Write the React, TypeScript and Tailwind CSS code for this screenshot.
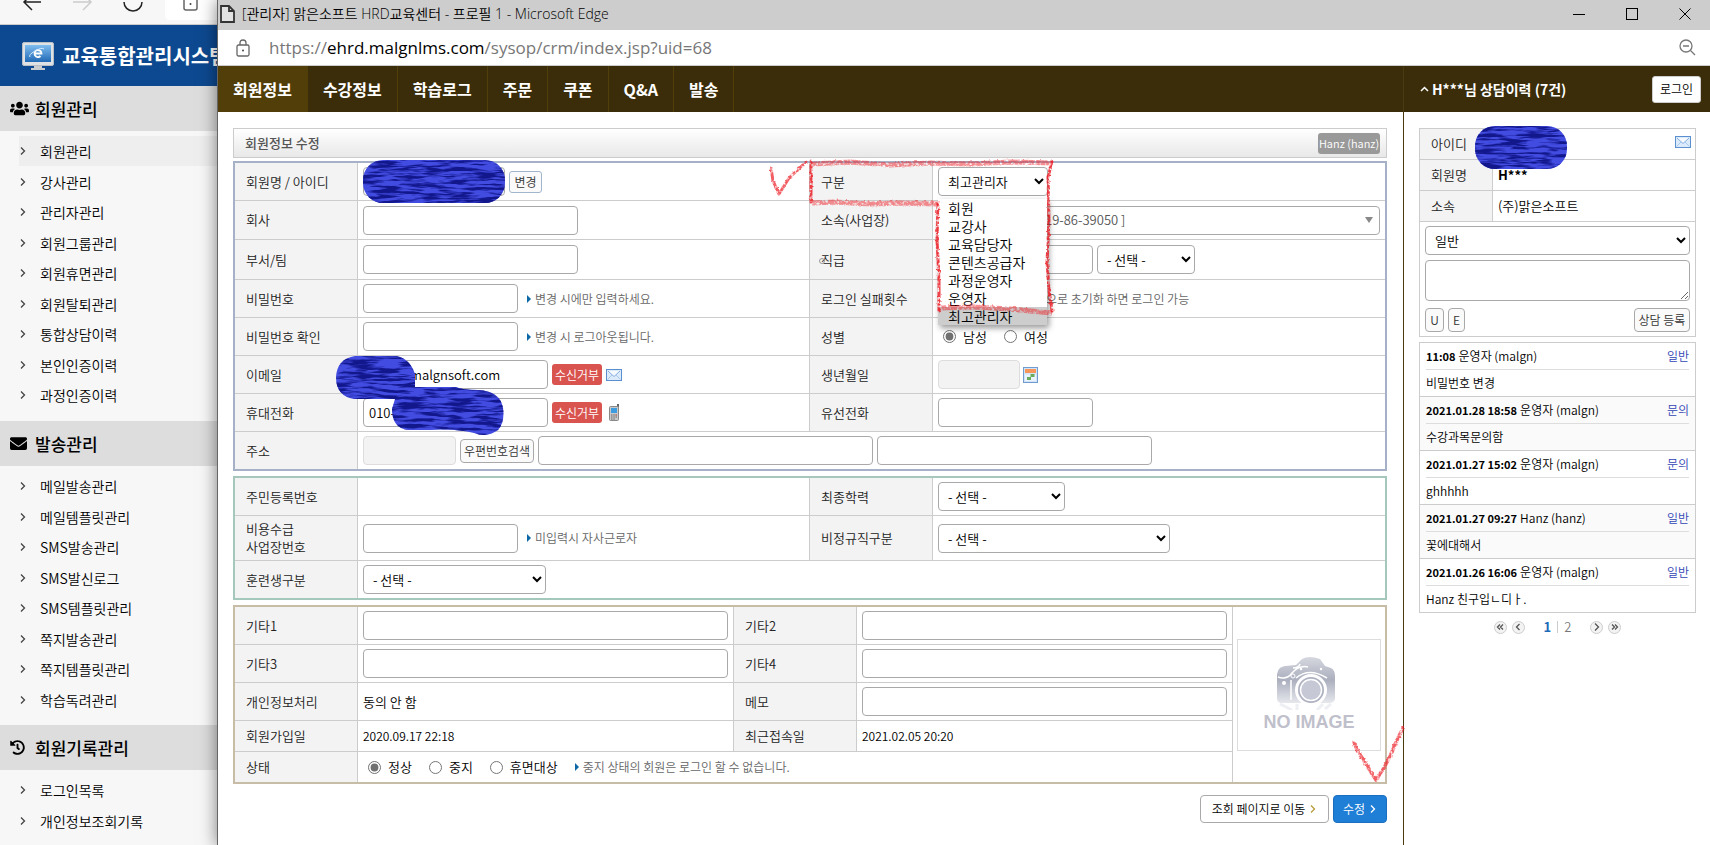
import React from 'react';
import { FaUsers, FaEnvelope, FaHistory } from 'react-icons/fa';

const menus = [
  {
    title: '회원관리',
    icon: <FaUsers size={19} />,
    active: '회원관리',
    items: ['회원관리', '강사관리', '관리자관리', '회원그룹관리', '회원휴면관리', '회원탈퇴관리', '통합상담이력', '본인인증이력', '과정인증이력'],
  },
  {
    title: '발송관리',
    icon: <FaEnvelope size={17} />,
    items: ['메일발송관리', '메일템플릿관리', 'SMS발송관리', 'SMS발신로그', 'SMS템플릿관리', '쪽지발송관리', '쪽지템플릿관리', '학습독려관리'],
  },
  {
    title: '회원기록관리',
    icon: <FaHistory size={15} />,
    items: ['로그인목록', '개인정보조회기록'],
  },
];

const tabs = ['회원정보', '수강정보', '학습로그', '주문', '쿠폰', 'Q&A', '발송'];

const roles = ['회원', '교강사', '교육담당자', '콘텐츠공급자', '과정운영자', '운영자', '최고관리자'];

const logs = [
  { date: '11:08', writer: '운영자 (malgn)', type: '일반', text: '비밀번호 변경' },
  { date: '2021.01.28 18:58', writer: '운영자 (malgn)', type: '문의', text: '수강과목문의함' },
  { date: '2021.01.27 15:02', writer: '운영자 (malgn)', type: '문의', text: 'ghhhhh' },
  { date: '2021.01.27 09:27', writer: 'Hanz (hanz)', type: '일반', text: '꽃에대해서' },
  { date: '2021.01.26 16:06', writer: '운영자 (malgn)', type: '일반', text: 'Hanz 친구입ㄴ디ㅏ.' },
];

const field = 'h-[29px] rounded border border-[#a9a9a9] bg-white px-[5px] text-[13px] text-black';
const select = 'h-[29px] rounded border border-[#a9a9a9] bg-white px-[5px] text-[13px] text-black';
const smallButton = 'rounded border border-[#a9a9a9] bg-[#fafafa] text-[12px] text-[#333]';

const Chevron: React.FC<{ className?: string; left?: boolean; double?: boolean }> = ({ className = '', left, double }) => (
  <svg className={className} width="8" height="8" viewBox="0 0 8 8" fill="none" stroke="currentColor" strokeWidth="1.300">
    {left ? <path d={double ? 'M4 1.5L1.5 4L4 6.5M7 1.5L4.5 4L7 6.5' : 'M5.5 1L2.5 4L5.5 7'} /> : <path d={double ? 'M1 1.5L3.5 4L1 6.5M4 1.5L6.5 4L4 6.5' : 'M2 0.5L5.5 4L2 7.5'} />}
  </svg>
);

const MailIcon = () => (
  <svg width="16" height="12" viewBox="0 0 16 12">
    <rect x="0.5" y="0.5" width="15" height="11" fill="#dcebfb" stroke="#5b8fd0" />
    <path d="M1.5 10.5L6 6M14.5 10.5L10 6" stroke="#a9c9ee" />
    <path d="M2 2L8 7.5L14 2" fill="#f6faff" stroke="#84aee0" />
  </svg>
);

const PhoneIcon = () => (
  <svg className="ml-[3px]" width="11" height="17" viewBox="0 0 11 17">
    <rect x="8" y="0" width="2" height="5" fill="#666" />
    <rect x="0.5" y="2.5" width="9" height="14" rx="1" fill="#c9c9c9" stroke="#888" />
    <rect x="2" y="4" width="6" height="5" fill="#3d9be0" />
    <path d="M2 11h1.500M4.300 11h1.500M6.500 11h1.500M2 13h1.500M4.300 13h1.500M6.500 13h1.500M2 15h1.500M4.300 15h1.500" stroke="#666" />
    <path d="M6.500 11h1.500" stroke="#d66" />
  </svg>
);

const CalendarIcon = () => (
  <svg className="-ml-px" width="15" height="16" viewBox="0 0 15 16">
    <rect x="0.5" y="0.5" width="14" height="15" fill="#d4e4f7" stroke="#6f9bd1" />
    <rect x="2" y="2" width="11" height="4" fill="#f7965a" />
    <path d="M2 7.500h11v6.500h-11z" fill="#eaf3fd" />
    <path d="M7.500 7h4v3h-4zM4 10h4v3h-4z" fill="#69ad5c" />
  </svg>
);

const CameraImage = () => (
  <svg className="mr-[6px]" width="58" height="54" viewBox="0 0 58 54">
    <defs>
      <linearGradient id="cam" x1="0" y1="0" x2="0" y2="1">
        <stop offset="0" stopColor="#d6d8df" />
        <stop offset="0.5" stopColor="#abafbe" />
        <stop offset="1" stopColor="#e6e8ed" />
      </linearGradient>
    </defs>
    <path d="M1 15Q2 11 8 10L19 9L25 3Q32 -1 43 3L48 10L54 12Q58 14 58 20V43Q57 47 52 47H3Q0 46 0 42V18Z" fill="url(#cam)" />
    <path d="M1 21Q10 24 15 17Q22 9 31 11M16 12Q22 12 23 8M14 24V44" fill="none" stroke="#fff" strokeWidth="1.500" />
    <path d="M19 22Q32 11 50 22" fill="none" stroke="#fff" strokeWidth="1.500" />
    <circle cx="34" cy="34" r="16" fill="#fff" />
    <circle cx="34" cy="34" r="13" fill="#aeb2c0" />
    <circle cx="34" cy="34" r="10.500" fill="#c6c9d5" stroke="#fff" strokeWidth="1.500" />
    <circle cx="16" cy="20" r="2" fill="#b2b6c4" stroke="#fff" />
    <circle cx="7" cy="27" r="2" fill="#fff" />
    <circle cx="24" cy="13" r="1.200" fill="#fff" />
    <circle cx="44" cy="13" r="1.200" fill="#fff" />
    <path d="M3 48L15 54M20 48V54M46 48L40 54M54 48L48 53" stroke="#eeeff3" strokeWidth="3" />
  </svg>
);

const Hint: React.FC<{ children: React.ReactNode }> = ({ children }) => (
  <span className="ml-[5px] flex items-center gap-1 text-[12px] text-[#666]">
    <svg width="4" height="8" viewBox="0 0 4 8"><path d="M0 0L4 4L0 8Z" fill="#0b67a5" /></svg>
    {children}
  </span>
);

const Label: React.FC<{ children: React.ReactNode; htmlFor?: string; h?: string; last?: boolean }> = ({ children, htmlFor, h = 'h-[38px]', last }) => (
  <th scope="row" className={`${h} border-r border-[#ccc] bg-[#f3f3f3] pl-[11px] text-left text-[13px] leading-[18px] font-[350] text-[#222] ${last ? '' : 'border-b'}`}>
    {htmlFor ? <label htmlFor={htmlFor}>{children}</label> : children}
  </th>
);

const Cell: React.FC<{ children?: React.ReactNode; colSpan?: number; line?: boolean; last?: boolean }> = ({ children, colSpan, line, last }) => (
  <td colSpan={colSpan} className={`border-[#ccc] px-[5px] ${line ? 'border-r' : ''} ${last ? '' : 'border-b'}`}>
    <div className="relative flex items-center gap-1">{children}</div>
  </td>
);

const Radio: React.FC<{ name: string; label: string; checked?: boolean }> = ({ name, label, checked }) => (
  <label className="mr-2 ml-[5px] flex items-center gap-[7px] text-[13px] text-black">
    <input type="radio" name={name} defaultChecked={checked} className="m-0 h-[13px] w-[13px] accent-[#707070]" />
    {label}
  </label>
);

const Sidebar = () => (
  <aside className="w-[217px] shrink-0 overflow-hidden bg-[#f7f7f7]">
    <div className="flex h-[25px] items-start overflow-hidden border-b border-[#ccc] text-[#222]">
      <svg width="217" height="24" viewBox="0 0 217 24" fill="none" stroke="currentColor" strokeWidth="1.500">
        <path d="M41 2H24M32 -6L24 2L32 10" />
        <path d="M73 2H91M83 -6L91 2L83 10" stroke="#ccc" />
        <path d="M124 2A9 9 0 0 0 142 2" />
        <path d="M165 -2V15Q165 20 170 20H217V-2Z" fill="#fff" stroke="none" />
        <path d="M184 0V8Q184 10 186 10H195Q197 10 197 8V0" stroke="#666" />
        <circle cx="190.500" cy="4" r="1" fill="#444" stroke="none" />
      </svg>
    </div>
    <div className="flex h-[61px] items-center gap-2 bg-[#0d4990] pl-[22px]">
      <svg className="shrink-0" width="32" height="28" viewBox="0 0 32 28">
        <defs>
          <linearGradient id="scr" x1="0" y1="0" x2="0" y2="1">
            <stop offset="0" stopColor="#7fbdf0" />
            <stop offset="1" stopColor="#2069b5" />
          </linearGradient>
        </defs>
        <rect x="0.500" y="0.500" width="31" height="23" rx="1.500" fill="#dfe2e4" stroke="#b9bfc4" />
        <rect x="3" y="3" width="26" height="17" fill="url(#scr)" />
        <path d="M12 24H20V26H23V28H9V26H12Z" fill="#c9cdd0" />
        <path d="M12.500 11.500H19.500A3.500 3.500 0 1 0 18.500 14" fill="none" stroke="#fff" strokeWidth="1.800" />
        <path d="M8 15Q6 13 13 9Q20 5 22 7" fill="none" stroke="#d9ecff" />
      </svg>
      <span className="text-[20px] font-bold whitespace-nowrap text-white">교육통합관리시스템</span>
    </div>
    {menus.map(menu => (
      <section key={menu.title}>
        <h2 className="flex h-[45px] items-center bg-[#ddd] pl-[10px] text-[17px] font-medium text-black">
          <span className="w-[25px]">{menu.icon}</span>
          {menu.title}
        </h2>
        <ul className="pt-[5px] pb-[10px] pl-[19px]">
          {menu.items.map(item => (
            <li key={item} className="odd:mb-px">
              <a href="#" className={`flex h-[30px] items-center text-[14px] text-black ${menu.active === item ? 'bg-[#eee]' : ''}`}>
                <Chevron className="mr-[13px] text-[#444]" />
                {item}
              </a>
            </li>
          ))}
        </ul>
      </section>
    ))}
  </aside>
);

const BasicTable = () => (
  <div className="mt-[3px] border-2 border-[#a6b0c7]">
    <table className="w-full table-fixed border-separate border-spacing-0">
      <colgroup>
        <col className="w-[123px]" /><col /><col className="w-[123px]" /><col />
      </colgroup>
      <tbody>
        <tr>
          <Label htmlFor="name">회원명 / 아이디</Label>
          <Cell line>
            <input id="name" className={`${field} w-[142px]`} />
            <button className="h-[22px] w-[33px] rounded-[3px] border border-[#9fb6cc] bg-[#fafafa] text-[12px] text-[#333]">변경</button>
          </Cell>
          <Label htmlFor="role">구분</Label>
          <Cell>
            <select id="role" className={`${select} w-[110px]`} defaultValue="최고관리자">
              <option>최고관리자</option>
            </select>
            <ul className="absolute top-8 left-0 z-10 w-[109px] bg-white text-[14px] leading-[18px] text-black shadow-[2px_3px_6px_rgba(0,0,0,0.4)]">
              {roles.map(role => (
                <li key={role} className={`pl-[10px] ${role === '최고관리자' ? 'bg-[#cdcdcd]' : ''}`}>{role}</li>
              ))}
            </ul>
          </Cell>
        </tr>
        <tr>
          <Label htmlFor="company" h="h-[39px]">회사</Label>
          <Cell line><input id="company" className={`${field} w-[215px]`} /></Cell>
          <Label htmlFor="site">소속(사업장)</Label>
          <Cell>
            <select id="site" className="h-[29px] w-full appearance-none rounded border border-[#a9a9a9] bg-white pl-[106px] text-[13px] text-[#555]">
              <option>19-86-39050 ]</option>
            </select>
            <svg className="absolute right-[7px]" width="8" height="6" viewBox="0 0 8 6"><path d="M0 0H8L4 6Z" fill="#888" /></svg>
          </Cell>
        </tr>
        <tr>
          <Label htmlFor="dept" h="h-[40px]">부서/팀</Label>
          <Cell line><input id="dept" className={`${field} w-[215px]`} /></Cell>
          <Label htmlFor="rank">직급</Label>
          <Cell>
            <input id="rank" className={`${field} w-[155px]`} />
            <select aria-label="직급" className={`${select} w-[98px]`}><option>- 선택 -</option></select>
          </Cell>
        </tr>
        <tr>
          <Label htmlFor="pw">비밀번호</Label>
          <Cell line>
            <input id="pw" type="password" className={`${field} w-[155px]`} />
            <Hint>변경 시에만 입력하세요.</Hint>
          </Cell>
          <Label>로그인 실패횟수</Label>
          <Cell><span className="pl-[108px] text-[12px] text-[#666]">으로 초기화 하면 로그인 가능</span></Cell>
        </tr>
        <tr>
          <Label htmlFor="pw2">비밀번호 확인</Label>
          <Cell line>
            <input id="pw2" type="password" className={`${field} w-[155px]`} />
            <Hint>변경 시 로그아웃됩니다.</Hint>
          </Cell>
          <Label>성별</Label>
          <Cell>
            <Radio name="gender" label="남성" checked />
            <Radio name="gender" label="여성" />
          </Cell>
        </tr>
        <tr>
          <Label htmlFor="email">이메일</Label>
          <Cell line>
            <input id="email" defaultValue="malgnsoft.com" className="h-[29px] w-[185px] rounded border border-[#a9a9a9] bg-white pl-[46px] text-[13px] text-black" />
            <span className="flex h-[21px] w-[50px] items-center justify-center rounded-[3px] bg-[#d9534f] text-[12px] text-white">수신거부</span>
            <MailIcon />
          </Cell>
          <Label htmlFor="birth">생년월일</Label>
          <Cell>
            <input id="birth" readOnly className="h-[29px] w-[82px] rounded border border-[#ddd] bg-[#f3f3f3]" />
            <CalendarIcon />
          </Cell>
        </tr>
        <tr>
          <Label htmlFor="mobile">휴대전화</Label>
          <Cell line>
            <input id="mobile" defaultValue="010-" className={`${field} w-[185px]`} />
            <span className="flex h-[21px] w-[50px] items-center justify-center rounded-[3px] bg-[#d9534f] text-[12px] text-white">수신거부</span>
            <PhoneIcon />
          </Cell>
          <Label htmlFor="tel">유선전화</Label>
          <Cell><input id="tel" className={`${field} w-[155px]`} /></Cell>
        </tr>
        <tr>
          <Label htmlFor="zip" h="h-[37px]" last>주소</Label>
          <Cell colSpan={3} last>
            <input id="zip" readOnly className="h-[29px] w-[93px] rounded border border-[#ddd] bg-[#f3f3f3]" />
            <button className={`${smallButton} h-6 w-[74px]`}>우편번호검색</button>
            <input aria-label="주소" className={`${field} w-[335px]`} />
            <input aria-label="상세주소" className={`${field} w-[275px]`} />
          </Cell>
        </tr>
      </tbody>
    </table>
  </div>
);

const TrainingTable = () => (
  <div className="mt-[5px] border-2 border-[#a6c7bb]">
    <table className="w-full table-fixed border-separate border-spacing-0">
      <colgroup>
        <col className="w-[123px]" /><col /><col className="w-[123px]" /><col />
      </colgroup>
      <tbody>
        <tr>
          <Label>주민등록번호</Label>
          <Cell line />
          <Label htmlFor="edu">최종학력</Label>
          <Cell><select id="edu" className={`${select} w-[127px]`}><option>- 선택 -</option></select></Cell>
        </tr>
        <tr>
          <Label htmlFor="bizno" h="h-[45px]">비용수급<br />사업장번호</Label>
          <Cell line>
            <input id="bizno" className={`${field} w-[155px]`} />
            <Hint>미입력시 자사근로자</Hint>
          </Cell>
          <Label htmlFor="temp">비정규직구분</Label>
          <Cell><select id="temp" className={`${select} w-[232px]`}><option>- 선택 -</option></select></Cell>
        </tr>
        <tr>
          <Label htmlFor="trainee" h="h-[37px]" last>훈련생구분</Label>
          <Cell colSpan={3} last><select id="trainee" className={`${select} w-[183px]`}><option>- 선택 -</option></select></Cell>
        </tr>
      </tbody>
    </table>
  </div>
);

const EtcTable = () => (
  <div className="mt-[5px] border-2 border-[#c7bda6]">
    <table className="w-full table-fixed border-separate border-spacing-0">
      <colgroup>
        <col className="w-[123px]" /><col /><col className="w-[123px]" /><col /><col className="w-[152px]" />
      </colgroup>
      <tbody>
        <tr>
          <Label htmlFor="etc1">기타1</Label>
          <Cell line><input id="etc1" className={`${field} w-full`} /></Cell>
          <Label htmlFor="etc2">기타2</Label>
          <Cell line><input id="etc2" className={`${field} w-full`} /></Cell>
          <td rowSpan={5} className="px-1">
            <div className="flex h-[112px] flex-col items-center justify-end border border-[#ddd] pb-4">
              <CameraImage />
              <span className="font-['Liberation_Sans',sans-serif] text-[18px] leading-[24px] font-bold text-[#bfc0cb]">NO IMAGE</span>
            </div>
          </td>
        </tr>
        <tr>
          <Label htmlFor="etc3">기타3</Label>
          <Cell line><input id="etc3" className={`${field} w-full`} /></Cell>
          <Label htmlFor="etc4">기타4</Label>
          <Cell line><input id="etc4" className={`${field} w-full`} /></Cell>
        </tr>
        <tr>
          <Label>개인정보처리</Label>
          <Cell line><span className="text-[13px] text-black">동의 안 함</span></Cell>
          <Label htmlFor="memo">메모</Label>
          <Cell line><input id="memo" className={`${field} w-full`} /></Cell>
        </tr>
        <tr>
          <Label h="h-[31px]">회원가입일</Label>
          <Cell line><span className="text-[12px] text-black">2020.09.17 22:18</span></Cell>
          <Label h="h-[31px]">최근접속일</Label>
          <Cell line><span className="text-[12px] text-black">2021.02.05 20:20</span></Cell>
        </tr>
        <tr>
          <Label h="h-[30px]" last>상태</Label>
          <Cell colSpan={3} line last>
            <Radio name="status" label="정상" checked />
            <Radio name="status" label="중지" />
            <Radio name="status" label="휴면대상" />
            <Hint>중지 상태의 회원은 로그인 할 수 없습니다.</Hint>
          </Cell>
        </tr>
      </tbody>
    </table>
  </div>
);

const PageButton: React.FC<{ label: string; left?: boolean; double?: boolean }> = ({ label, left, double }) => (
  <button aria-label={label} className="flex h-[13px] w-[13px] items-center justify-center rounded-full border border-[#ccc] bg-[#f3f3f3] text-[#555]">
    <Chevron left={left} double={double} />
  </button>
);

const Counsel = () => (
  <aside className="flex w-[307px] shrink-0 flex-col border-l border-[#4a3a10]">
    <div className="flex h-[46px] items-center bg-[#3b2d09] pr-[9px] pl-4 text-white">
      <svg width="9" height="6" viewBox="0 0 9 6" fill="none" stroke="currentColor" strokeWidth="1.500"><path d="M1 5L4.500 1.500L8 5" /></svg>
      <h2 className="ml-[3px] text-[14px] font-bold">H***님 상담이력 (7건)</h2>
      <button className="ml-auto h-[27px] w-[49px] rounded-[3px] border border-[#ccc] bg-white text-[12px] text-black">로그인</button>
    </div>
    <div className="px-[15px] pt-4 pr-[14px]">
      <div className="border border-[#ccc]">
        <table className="w-full border-separate border-spacing-0 text-[13px] text-black">
          <tbody>
            <tr>
              <th scope="row" className="h-[31px] w-[73px] border-r border-b border-[#ccc] bg-[#f3f3f3] pl-[11px] text-left font-[350] text-[#222]">아이디</th>
              <td className="border-b border-[#ccc] pr-1"><div className="flex justify-end pb-1"><MailIcon /></div></td>
            </tr>
            <tr>
              <th scope="row" className="h-[31px] border-r border-b border-[#ccc] bg-[#f3f3f3] pl-[11px] text-left font-[350] text-[#222]">회원명</th>
              <td className="border-b border-[#ccc] pl-[5px] font-bold">H***</td>
            </tr>
            <tr>
              <th scope="row" className="h-[31px] border-r border-b border-[#ccc] bg-[#f3f3f3] pl-[11px] text-left font-[350] text-[#222]">소속</th>
              <td className="border-b border-[#ccc] pl-[5px]">(주)맑은소프트</td>
            </tr>
          </tbody>
        </table>
        <div className="flex flex-col gap-[5px] px-[5px] pt-1 pb-1">
          <select aria-label="상담구분" className={`${select} w-full`}><option>일반</option></select>
          <textarea aria-label="상담내용" className="h-[41px] w-full rounded border border-[#a9a9a9]" />
          <div className="flex gap-1 pt-[2px]">
            <button className={`${smallButton} h-6 w-[19px]`}>U</button>
            <button className={`${smallButton} h-6 w-[17px]`}>E</button>
            <button className={`${smallButton} ml-auto h-6 w-14`}>상담 등록</button>
          </div>
        </div>
      </div>
      <ul className="mt-[5px] border border-b-0 border-[#ccc] text-[12px] text-black">
        {logs.map(log => (
          <li key={log.date} className="border-b border-[#ccc] px-[6px] leading-[26px] even:bg-[#fafafa]">
            <div className="flex items-center gap-[3px] border-b border-[#ddd]">
              <strong className="text-[11px]">{log.date}</strong>
              {log.writer}
              <a href="#" className="ml-auto text-[#3145b5]">{log.type}</a>
            </div>
            <p>{log.text}</p>
          </li>
        ))}
      </ul>
      <nav className="mt-[6px] flex items-center justify-center gap-[5px] text-[13px] leading-[16px]">
        <PageButton label="처음" left double />
        <PageButton label="이전" left />
        <strong className="ml-[14px] text-[#1e6bb8]">1</strong>
        <span className="mx-px h-3 w-px bg-[#ccc]" />
        <a href="#" className="mr-[14px] text-[#777]">2</a>
        <PageButton label="다음" />
        <PageButton label="마지막" double />
      </nav>
    </div>
  </aside>
);

// pen marks and masked personal data drawn over the page
const Marks = () => (
  <svg className="pointer-events-none absolute top-0 left-0 z-20" width="1710" height="845" viewBox="0 0 1710 845" fill="none">
    <defs>
      <filter id="brush" x="0" y="0" width="1" height="1" colorInterpolationFilters="sRGB">
        <feTurbulence type="fractalNoise" baseFrequency="0.04 0.32" numOctaves="3" seed="4" result="noise" />
        <feColorMatrix in="noise" values="0 0 0 0 0.07  0 0 0 0 0.09  0 0 0 0 0.55  0 5 0 0 -2.1" result="dark" />
        <feComposite in="dark" in2="SourceAlpha" operator="in" result="ink" />
        <feMerge>
          <feMergeNode in="SourceGraphic" />
          <feMergeNode in="ink" />
        </feMerge>
      </filter>
      <filter id="chalk" x="-0.2" y="-0.2" width="1.400" height="1.400" colorInterpolationFilters="sRGB">
        <feTurbulence type="fractalNoise" baseFrequency="0.35" numOctaves="2" seed="2" result="noise" />
        <feDisplacementMap in="SourceGraphic" in2="noise" scale="3" xChannelSelector="R" yChannelSelector="G" result="rough" />
        <feColorMatrix in="noise" values="0 0 0 0 1  0 0 0 0 1  0 0 0 0 1  0 3 0 0 -0.6" result="grain" />
        <feComposite in="rough" in2="grain" operator="in" />
      </filter>
    </defs>
    <g fill="#424ce0" filter="url(#brush)">
      <rect x="363" y="160" width="142" height="43" rx="20" />
      <rect x="1475" y="126" width="92" height="43" rx="20" />
      <path d="M355 356H397Q410 359 415 374V387H456Q462 390 478 390Q500 391 503 408Q505 422 498 430Q487 438 474 433Q455 428 430 430H408Q392 428 392 409L395 399H354Q336 396 336 377Q337 359 355 356Z" />
    </g>
    <g stroke="#ec1c24" strokeLinejoin="round" strokeLinecap="round" filter="url(#chalk)">
      <g opacity="0.700">
        <path d="M771 168L773 181L779 194L789 178L806 162" strokeWidth="3" />
        <path d="M1354 742L1357 750L1364 761L1371 772L1376 780L1385 766L1392 752L1396 742L1403 728" strokeWidth="3.500" />
      </g>
      <g opacity="0.500" strokeWidth="5" strokeLinecap="butt">
        <path d="M812 164L850 162L890 165L930 163L970 164L1010 162L1052 163" />
        <path d="M812 203L835 202L870 204L900 203L938 204" />
        <path d="M939 308L975 307L1010 309L1052 313" />
      </g>
      <g opacity="0.850" strokeWidth="3">
        <path d="M811 161V202" />
        <path d="M938 203L937 240L939 280L939 311" />
        <path d="M1052 161L1048 178L1049 220L1047 263L1049 290L1052 311" />
      </g>
    </g>
    <circle cx="822" cy="261" r="2.500" stroke="#999" />
  </svg>
);

const App: React.FC = () => {
  return (
    <div className="relative flex min-h-screen overflow-hidden bg-white font-['Noto_Sans_CJK_KR',sans-serif] font-[350]">
      <Sidebar />
      <div className="z-10 flex min-w-0 flex-1 flex-col border-l border-[#666] bg-white shadow-[0_0_16px_rgba(0,0,0,0.5)]">
        <header>
          <div className="flex h-[30px] items-center bg-[#cdcdcd] pb-[3px] pl-[2px] text-black">
            <svg width="15" height="18" viewBox="0 0 15 18" fill="none" stroke="#333" strokeWidth="1.800">
              <path d="M1 1H9L14 6V17H1Z" fill="#e2e2e2" />
              <path d="M9 1V6H14" />
            </svg>
            <h1 className="ml-[7px] font-['Open_Sans','Noto_Sans_CJK_KR',sans-serif] text-[14px] font-[350]">[관리자] 맑은소프트 HRD교육센터 - 프로필 1 - Microsoft Edge</h1>
            <div className="ml-auto flex gap-[41px] pr-[19px]">
              <button aria-label="최소화"><svg width="12" height="12" viewBox="0 0 12 12" stroke="#000"><path d="M0 6.500H12" /></svg></button>
              <button aria-label="최대화"><svg width="12" height="12" viewBox="0 0 12 12" fill="none" stroke="#000"><rect x="0.500" y="0.500" width="11" height="11" /></svg></button>
              <button aria-label="닫기"><svg width="12" height="12" viewBox="0 0 12 12" stroke="#000"><path d="M0.500 0.500L11.500 11.500M11.500 0.500L0.500 11.500" /></svg></button>
            </div>
          </div>
          <div className="flex h-[36px] items-center border-b border-[#ccc] px-[18px]">
            <svg width="14" height="18" viewBox="0 0 14 18" fill="none" stroke="#666" strokeWidth="1.300">
              <rect x="1" y="6" width="12" height="11" rx="1.500" />
              <path d="M4 6V4Q4 1 7 1Q10 1 10 4V6" />
              <circle cx="7" cy="11.500" r="1" fill="#444" stroke="none" />
            </svg>
            <p className="ml-[19px] font-['Open_Sans',sans-serif] text-[17px] font-normal text-[#777]">
              https://<span className="text-black">ehrd.malgnlms.com</span>/sysop/crm/index.jsp?uid=68
            </p>
            <svg className="ml-auto -mr-1" width="17" height="17" viewBox="0 0 17 17" fill="none" stroke="#777" strokeWidth="1.300">
              <circle cx="7" cy="7" r="6" />
              <path d="M4 7H10M11.500 11.500L16 16" />
            </svg>
          </div>
        </header>
        <div className="flex flex-1">
          <div className="min-w-0 flex-1">
            <nav className="flex h-[46px] bg-[#3b2d09] text-[16px] font-bold text-white">
              {tabs.map((tab, i) => (
                <a key={tab} href="#" className={`flex items-center border-r border-[#523e09] px-[15px] ${i === 0 ? 'bg-[#523e09]' : ''}`}>{tab}</a>
              ))}
            </nav>
            <main className="pt-4 pr-4 pl-[15px]">
              <div className="flex h-[30px] items-center justify-between border border-[#ccc] bg-gradient-to-b from-white to-[#e8e8e8] pr-[6px] pl-[11px]">
                <h2 className="text-[13px] font-medium text-[#555]">회원정보 수정</h2>
                <span className="flex h-[21px] w-[62px] items-center justify-center rounded-[3px] bg-[#999] text-[11px] text-white">Hanz (hanz)</span>
              </div>
              <BasicTable />
              <TrainingTable />
              <EtcTable />
              <div className="mt-[11px] flex justify-end gap-1">
                <button className="flex h-7 w-[129px] items-center justify-center gap-1 rounded border border-[#a9a9a9] bg-white text-[12px] text-black">
                  조회 페이지로 이동 <Chevron className="text-[#b89b3c]" />
                </button>
                <button className="flex h-7 w-[54px] items-center justify-center gap-1 rounded border border-[#1b6fc0] bg-[#1f7ed6] text-[12px] text-white">
                  수정 <Chevron />
                </button>
              </div>
            </main>
          </div>
          <Counsel />
        </div>
      </div>
      <Marks />
    </div>
  );
};

export default App;
